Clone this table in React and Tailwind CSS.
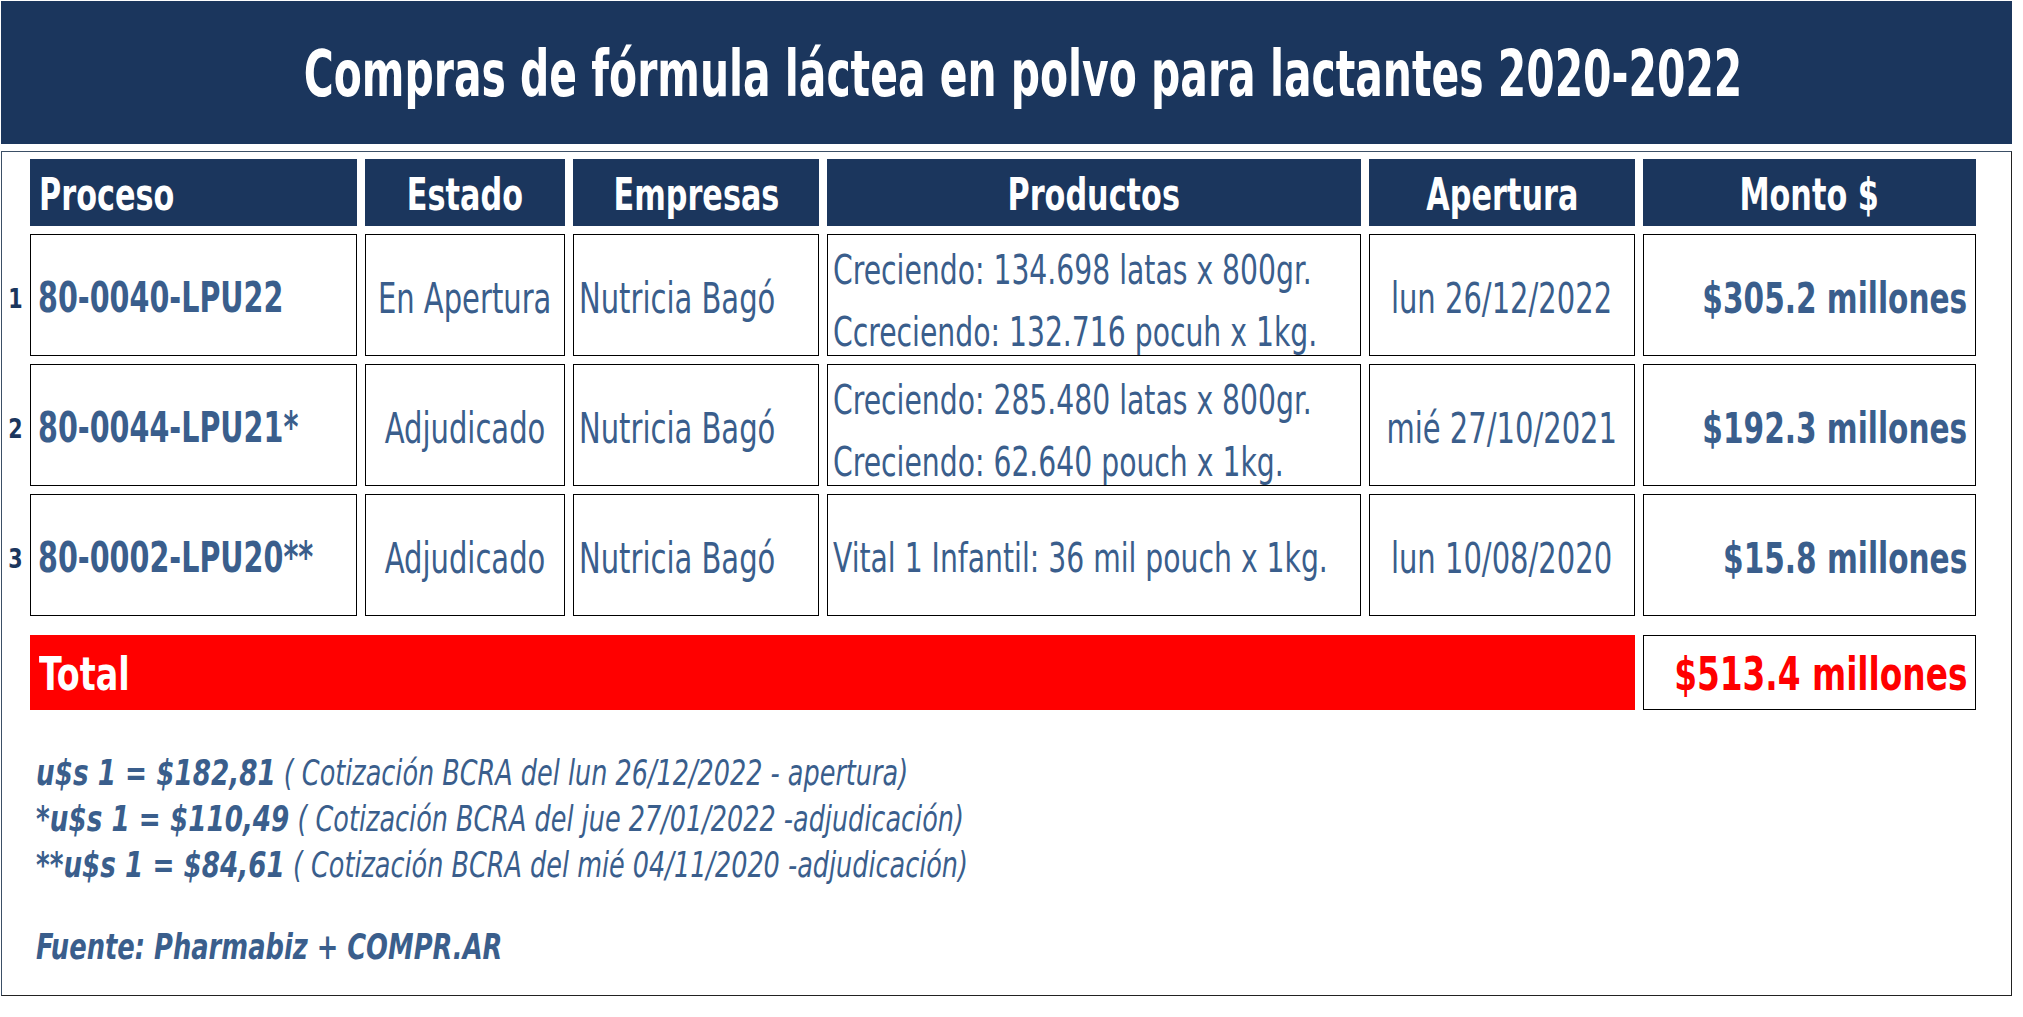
import React from "react";

const rows = [
  {
    n: "1",
    proceso: "80-0040-LPU22",
    estado: "En Apertura",
    empresa: "Nutricia Bagó",
    productos: ["Creciendo: 134.698 latas x 800gr.", "Ccreciendo: 132.716 pocuh x 1kg."],
    apertura: "lun 26/12/2022",
    monto: "$305.2 millones",
  },
  {
    n: "2",
    proceso: "80-0044-LPU21*",
    estado: "Adjudicado",
    empresa: "Nutricia Bagó",
    productos: ["Creciendo: 285.480 latas x 800gr.", "Creciendo: 62.640 pouch x 1kg."],
    apertura: "mié 27/10/2021",
    monto: "$192.3 millones",
  },
  {
    n: "3",
    proceso: "80-0002-LPU20**",
    estado: "Adjudicado",
    empresa: "Nutricia Bagó",
    productos: ["Vital 1 Infantil: 36 mil pouch x 1kg."],
    apertura: "lun 10/08/2020",
    monto: "$15.8 millones",
  },
];

const font = { fontFamily: '"Liberation Sans Narrow", "DejaVu Sans Condensed", "Liberation Sans", sans-serif' };

// condensed look: the narrow face is squeezed a bit more on the x axis
const T = ({ className = "", children }) => (
  <span className={`inline-block shrink-0 whitespace-nowrap ${className}`}>{children}</span>
);

const cols = "grid grid-cols-[20px_327px_200px_246px_534px_266px_333px] gap-x-[8px]";
const cell = "h-[122px] border border-black bg-white flex items-center pt-[6px] text-[#3a5e8c] overflow-visible";
const head = "h-[67px] bg-[#1b365d] text-white font-bold text-[44px] leading-none flex items-center pt-[4px]";

const App = () => {
  return (
    <div className="w-[2023px] h-[1017px] bg-white overflow-hidden" style={font}>
      <div className="mt-[1px] ml-[1px] w-[2011px] h-[143px] bg-[#1b365d] flex items-center justify-center pt-[2px] pl-[34px]">
        <h1 className="text-white font-bold text-[64px] leading-none">
          <T className="scale-x-[0.71] origin-center">
            Compras de fórmula láctea en polvo para lactantes 2020-2022
          </T>
        </h1>
      </div>

      <div className="mt-[7px] ml-[1px] w-[2011px] h-[845px] border border-t-[#3b4f66] border-l-[#3b4f66] border-r-[#222] border-b-[#222] pt-[7px]">
        <div className={`${cols} gap-y-[8px]`}>
          <div />
          <div className={`${head} pl-[9px]`}>
            <T className="scale-x-[0.765] origin-left">Proceso</T>
          </div>
          <div className={`${head} justify-center`}>
            <T className="scale-x-[0.765] origin-center">Estado</T>
          </div>
          <div className={`${head} justify-center`}>
            <T className="scale-x-[0.765] origin-center">Empresas</T>
          </div>
          <div className={`${head} justify-center`}>
            <T className="scale-x-[0.765] origin-center">Productos</T>
          </div>
          <div className={`${head} justify-center`}>
            <T className="scale-x-[0.765] origin-center">Apertura</T>
          </div>
          <div className={`${head} justify-center`}>
            <T className="scale-x-[0.765] origin-center">Monto $</T>
          </div>

          {rows.map((r) => (
            <React.Fragment key={r.n}>
              <div className="h-[122px] flex items-center justify-center pl-[6px] pt-[6px] text-[27px] font-bold text-[#1b365d] leading-none">
                <T className="scale-x-[0.85] origin-center">{r.n}</T>
              </div>
              <div className={`${cell} pl-[7px] font-bold text-[42px] leading-none`}>
                <T className="scale-x-[0.757] origin-left">{r.proceso}</T>
              </div>
              <div className={`${cell} justify-center text-[43px] leading-none`}>
                <T className="scale-x-[0.75] origin-center">{r.estado}</T>
              </div>
              <div className={`${cell} pl-[5px] text-[43px] leading-none`}>
                <T className="scale-x-[0.75] origin-left">{r.empresa}</T>
              </div>
              <div className={`${cell} pl-[5px] text-[40px] leading-[62px]`}>
                <T className={`scale-x-[0.785] origin-left ${r.productos.length > 1 ? "pt-[6px]" : ""}`}>
                  {r.productos.map((p) => (
                    <div key={p}>{p}</div>
                  ))}
                </T>
              </div>
              <div className={`${cell} justify-center text-[43px] leading-none`}>
                <T className="scale-x-[0.75] origin-center">{r.apertura}</T>
              </div>
              <div className={`${cell} justify-end pr-[8px] font-bold text-[43px] leading-none`}>
                <T className="scale-x-[0.765] origin-right">{r.monto}</T>
              </div>
            </React.Fragment>
          ))}
        </div>

        <div className={`${cols} mt-[19px]`}>
          <div />
          <div className="col-span-5 h-[75px] bg-[#ff0000] flex items-center pl-[9px] pt-[2px] text-white font-bold text-[47px] leading-none">
            <T className="scale-x-[0.79] origin-left">Total</T>
          </div>
          <div className="h-[75px] border border-black flex items-center justify-end pr-[8px] pt-[2px] text-[#ff0000] font-bold text-[47px] leading-none">
            <T className="scale-x-[0.775] origin-right">$513.4 millones</T>
          </div>
        </div>

        <div className="mt-[40px] pl-[34px] italic text-[#3a5e8c]">
          <T className="scale-x-[0.81] origin-left">
            <p className="leading-[46px] text-[35px]">
              <span className="font-bold text-[36px]">u$s 1 = $182,81</span>
              <span>{"  "}( Cotización BCRA del lun 26/12/2022 - apertura)</span>
            </p>
            <p className="leading-[46px] text-[35px]">
              <span className="font-bold text-[36px]">*u$s 1 = $110,49</span>
              <span> ( Cotización BCRA del jue 27/01/2022 -adjudicación)</span>
            </p>
            <p className="leading-[46px] text-[35px]">
              <span className="font-bold text-[36px]">**u$s 1 = $84,61</span>
              <span>{"  "}( Cotización BCRA del mié 04/11/2020 -adjudicación)</span>
            </p>
          </T>
          <div className="mt-[36px]">
            <T className="scale-x-[0.795] origin-left leading-[46px] text-[36px] font-bold">
              Fuente: Pharmabiz + COMPR.AR
            </T>
          </div>
        </div>
      </div>
    </div>
  );
};

export default App;
